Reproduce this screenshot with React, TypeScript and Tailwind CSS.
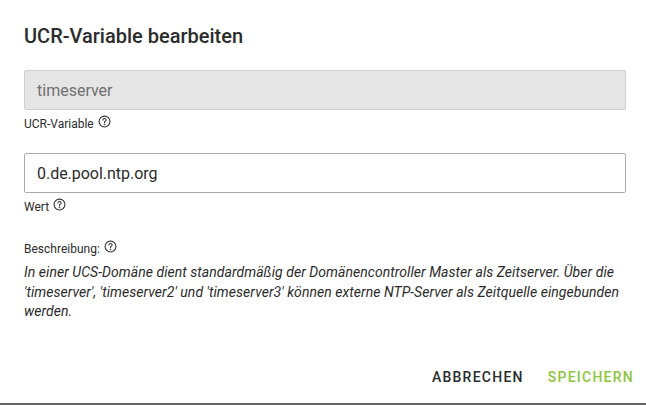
const Help = () => (
  <svg width="13" height="13" viewBox="0 0 24 24" fill="none" stroke="#333" strokeWidth="2" strokeLinecap="round" className="inline-block relative top-[-3px]">
    <circle cx="12" cy="12" r="10" />
    <path d="M9 9.4a3 3 0 0 1 6 0c0 2-3 2.1-3 4.4" />
    <circle cx="12" cy="17.4" r="0.5" fill="#333" />
  </svg>
);

export default function App() {
  return (
    <div className="w-[646px] h-[405px] bg-white flex flex-col font-['Roboto',sans-serif] text-[#2b2b2b] border-b-2 border-[#666] overflow-hidden">
      <h1 className="text-[20px] font-medium leading-[24px] mt-[24px] ml-[24px]">UCR-Variable bearbeiten</h1>
      <div className="pl-[24px] pr-[20px] mt-[22px]">
        <div className="h-[40px] bg-[#e5e5e5] border border-[#cfcfcf] rounded-[2px] flex items-center px-[12px] pt-[1px] text-[16px] text-[#707070]">timeserver</div>
        <div className="text-[12px] leading-[14px] mt-[7px] flex items-center gap-[4px]">UCR-Variable <Help /></div>
        <div className="h-[40px] mt-[22px] bg-white border border-[#aaa] rounded-[2px] flex items-center px-[12px] pt-[1px] text-[16px] tracking-[-0.03px]">0.de.pool.ntp.org</div>
        <div className="text-[12px] leading-[14px] mt-[7px] flex items-center gap-[4px]">Wert <Help /></div>
        <div className="text-[12px] leading-[14px] mt-[28px] flex items-center gap-[4px]">Beschreibung: <Help /></div>
        <p className="text-[14px] italic leading-[19.6px] tracking-[0.05px] mt-[7px]">In einer UCS-Domäne dient standardmäßig der Domänencontroller Master als Zeitserver. Über die 'timeserver', 'timeserver2' und 'timeserver3' können externe NTP-Server als Zeitquelle eingebunden werden.</p>
      </div>
      <div className="mt-auto flex justify-end gap-[24px] pr-[12px] pb-[15px] text-[14px] font-medium tracking-[1.25px]">
        <span>ABBRECHEN</span>
        <span className="text-[#8ec53f]">SPEICHERN</span>
      </div>
    </div>
  );
}
